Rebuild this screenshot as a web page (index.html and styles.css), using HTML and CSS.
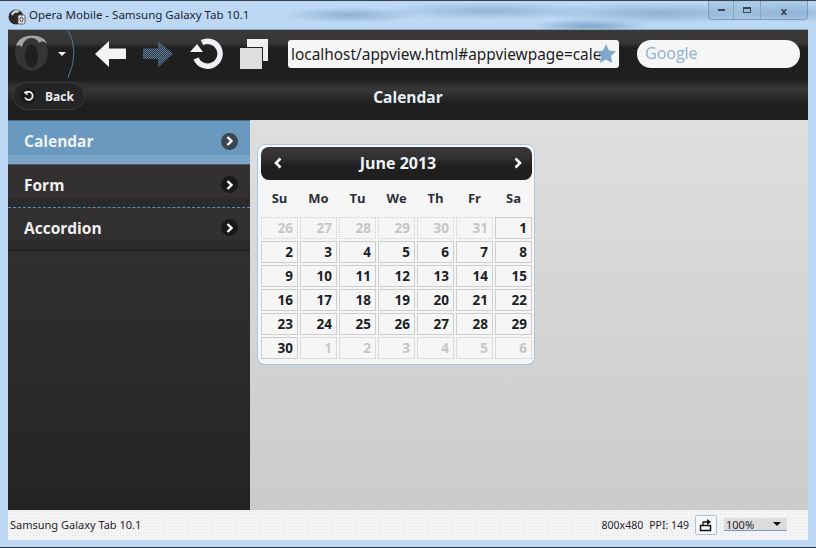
FILE: index.html
```html
<!DOCTYPE html>
<html lang="en">
  <head>
    <meta charset="UTF-8" />
    <title>Opera Mobile - Samsung Galaxy Tab 10.1</title>
    <link rel="stylesheet" href="styles.css">
  </head>
  <body>
    <div class="window">
      <div class="titlebar">
        <svg class="app-icon" width="18" height="18" viewBox="0 0 18 18">
          <circle cx="8" cy="10" r="7.5" fill="#2b2b2b" />
          <path d="M3 7a6 6 0 0 1 9-3l-3 2a3 3 0 0 0-4 3z" fill="#cfcfcf" />
          <rect x="10" y="8" width="7" height="9" rx="1.5" fill="#f1f1f1" stroke="#555" />
          <ellipse cx="13.5" cy="12.5" rx="1.5" ry="2.4" fill="none" stroke="#333" />
        </svg>
        <span class="window-title">Opera Mobile - Samsung Galaxy Tab 10.1</span>
        <div class="window-buttons">
          <div class="win-btn btn-min"><span class="glyph-min"></span></div>
          <div class="win-btn btn-max"><span class="glyph-max"></span></div>
          <div class="win-btn btn-close"><span class="glyph-close">x</span></div>
        </div>
      </div>

      <div class="app">
        <div class="toolbar">
          <div class="opera-menu">
            <svg width="72" height="50" viewBox="0 0 72 50">
              <defs>
                <pattern id="dither" width="2" height="2" patternUnits="userSpaceOnUse">
                  <rect width="2" height="2" fill="#2a3845" />
                  <rect width="1" height="1" fill="#5d7c96" />
                  <rect x="1" y="1" width="1" height="1" fill="#5d7c96" />
                </pattern>
              </defs>
              <path d="M60 1Q72 22 60 49" fill="none" stroke="#4f7796" stroke-width="1" />
              <ellipse cx="23.500" cy="24" rx="16.500" ry="17.500" fill="#363535" />
              <path d="M8 17C10 10 16 6.500 24 6.500S38 10 39 15C36 12 33 12 31.500 14 29 10 26 9 23.500 9 18 9 15 13 14 18 12 16 10 16 8 17z" fill="#a5a5a5" />
              <ellipse cx="23.500" cy="27" rx="6.500" ry="11.500" fill="#1f1f1f" />
              <path d="M50 23h8l-4 4z" fill="#f4f4f4" />
            </svg>
          </div>
          <svg class="tool-back" width="31" height="26" viewBox="0 0 31 26">
            <path d="M0 13 14 0v7.500h17v10.500H14v8z" fill="#f4f4f4" />
          </svg>
          <svg class="tool-forward" width="30" height="26" viewBox="0 0 30 26">
            <path d="M30 13 15 0v7.500H0V18h15v8z" fill="url(#dither)" />
          </svg>
          <svg class="tool-reload" width="34" height="32" viewBox="0 0 34 32">
            <path d="M12 4.500a12.500 12.500 0 1 1-6 16" fill="none" stroke="#eef2f5" stroke-width="5.500" />
            <path d="M7 6 0 14h13z" fill="#f4f4f4" />
          </svg>
          <svg class="tool-tabs" width="29" height="30" viewBox="0 0 29 30">
            <path d="M7 0h21v22h-5V8H7z" fill="#f1f1f1" />
            <rect x="0" y="9" width="22" height="21" class="tabs-front" />
          </svg>
          <div class="url-box">
            <span class="url-text">localhost/appview.html#appviewpage=cale</span>
            <svg class="url-star" width="20" height="19" viewBox="0 0 20 19">
              <path d="M10 0l3 6.500 7 .8-5.200 4.700 1.400 7L10 15.500 3.800 19l1.400-7L0 7.300l7-.8z" fill="#7fa6cb" />
            </svg>
          </div>
          <div class="search-box">Google</div>
        </div>

        <div class="page-header">
          <div class="back-btn">
            <svg width="16" height="16" viewBox="0 0 16 16">
              <circle cx="8" cy="8" r="8" fill="#1a1a1a" />
              <path d="M6.500 4.500a4 4 0 1 1-1.500 5" fill="none" stroke="#f1f1f1" stroke-width="1.800" />
              <path d="M3.500 4.500l4-2v5z" fill="#f1f1f1" />
            </svg>
            <span>Back</span>
          </div>
          <h1 class="page-title">Calendar</h1>
        </div>

        <div class="content">
          <ul class="sidebar">
            <li class="nav-item active">
              <span>Calendar</span>
              <span class="nav-arrow"><svg width="10" height="10" viewBox="0 0 10 10"><path d="M2.500 1l4 4-4 4" fill="none" stroke="#fff" stroke-width="2.400" /></svg></span>
            </li>
            <li class="nav-item">
              <span>Form</span>
              <span class="nav-arrow"><svg width="10" height="10" viewBox="0 0 10 10"><path d="M2.500 1l4 4-4 4" fill="none" stroke="#fff" stroke-width="2.400" /></svg></span>
            </li>
            <li class="nav-item">
              <span>Accordion</span>
              <span class="nav-arrow"><svg width="10" height="10" viewBox="0 0 10 10"><path d="M2.500 1l4 4-4 4" fill="none" stroke="#fff" stroke-width="2.400" /></svg></span>
            </li>
          </ul>

          <div class="main">
            <div class="calendar">
              <div class="cal-header">
                <svg width="10" height="12" viewBox="0 0 10 12"><path d="M7.500 1.500 3 6l4.500 4.500" fill="none" stroke="#fff" stroke-width="2.600" /></svg>
                <span class="cal-month">June 2013</span>
                <svg width="10" height="12" viewBox="0 0 10 12"><path d="M2.500 1.500 7 6l-4.500 4.500" fill="none" stroke="#fff" stroke-width="2.600" /></svg>
              </div>
              <div class="cal-weekdays">
                <span>Su</span><span>Mo</span><span>Tu</span><span>We</span><span>Th</span><span>Fr</span><span>Sa</span>
              </div>
              <div class="cal-grid">
                <div class="day off">26</div><div class="day off">27</div><div class="day off">28</div><div class="day off">29</div><div class="day off">30</div><div class="day off">31</div><div class="day">1</div>
                <div class="day">2</div><div class="day">3</div><div class="day">4</div><div class="day">5</div><div class="day">6</div><div class="day">7</div><div class="day">8</div>
                <div class="day">9</div><div class="day">10</div><div class="day">11</div><div class="day">12</div><div class="day">13</div><div class="day">14</div><div class="day">15</div>
                <div class="day">16</div><div class="day">17</div><div class="day">18</div><div class="day">19</div><div class="day">20</div><div class="day">21</div><div class="day">22</div>
                <div class="day">23</div><div class="day">24</div><div class="day">25</div><div class="day">26</div><div class="day">27</div><div class="day">28</div><div class="day">29</div>
                <div class="day">30</div><div class="day off next">1</div><div class="day off next">2</div><div class="day off next">3</div><div class="day off next">4</div><div class="day off next">5</div><div class="day off next">6</div>
              </div>
            </div>
          </div>
        </div>

        <div class="statusbar">
          <span class="device-name">Samsung Galaxy Tab 10.1</span>
          <span class="status-item">800x480</span>
          <span class="status-item">PPI: 149</span>
          <div class="rotate-btn">
            <svg width="14" height="14" viewBox="0 0 14 14">
              <rect x="1.500" y="7.500" width="10" height="5" fill="none" stroke="#111" stroke-width="1.500" />
              <path d="M4 7V4h5" fill="none" stroke="#111" stroke-width="1.300" />
              <path d="M8 1l4 3-4 3z" fill="#111" />
            </svg>
          </div>
          <div class="zoom-select">
            <span>100%</span>
            <span class="zoom-caret"></span>
          </div>
        </div>
      </div>
    </div>
  </body>
</html>
```

FILE: styles.css
```css
* {
  box-sizing: border-box;
}

html,
body {
  margin: 0;
  height: 100%;
  overflow: hidden;
}

body {
  font-family: "Open Sans", "Noto Sans", sans-serif;
  background-color: #222;
}

.window {
  width: 816px;
  height: 548px;
  display: flex;
  flex-direction: column;
  padding: 0 8px 7px 8px;
  border-top: 1px solid #38424c;
  border-bottom: 1px solid #2a3440;
  background-color: #bcd8f5;
  background-image:
    radial-gradient(ellipse 70px 8px at 350px 14px, #8fb0d1, transparent),
    radial-gradient(ellipse 110px 9px at 490px 10px, #92b3d4, transparent),
    radial-gradient(ellipse 60px 7px at 590px 25px, #7fa5c9, transparent),
    radial-gradient(ellipse 120px 11px at 660px 12px, #8eb0d1, transparent),
    radial-gradient(ellipse 60px 10px at 790px 12px, #94b5d6, transparent);
  background-repeat: no-repeat;
}

.titlebar {
  height: 28px;
  flex: none;
  display: flex;
  align-items: flex-start;
}

.app-icon {
  margin: 6px 0 0 0;
}

.window-title {
  margin: 6px 0 0 3px;
  font-family: "Noto Sans", sans-serif;
  font-size: 11.500px;
  line-height: 16px;
  color: #1c2630;
  white-space: nowrap;
}

.window-buttons {
  margin-left: auto;
  display: flex;
  width: 100px;
  height: 19px;
  border: 1px solid #7f9cbb;
  border-top: none;
  border-radius: 0 0 4px 4px;
  background-color: rgba(140, 175, 210, 0.35);
}

.win-btn {
  display: flex;
  align-items: center;
  justify-content: center;
  border-right: 1px solid #86a4c2;
}

.btn-min {
  width: 25px;
}

.btn-max {
  width: 27px;
}

.btn-close {
  flex: 1;
  border-right: none;
}

.glyph-min {
  width: 7px;
  height: 2px;
  background-color: #3a4652;
}

.glyph-max {
  width: 8px;
  height: 6px;
  border: 1px solid #3a4652;
  border-top-width: 2px;
}

.glyph-close {
  font-size: 11px;
  line-height: 11px;
  font-weight: 700;
  color: #3a4652;
}

.app {
  flex: 1;
  min-height: 0;
  display: flex;
  flex-direction: column;
  border-top: 1px solid #8aa5bf;
}

.toolbar {
  height: 50px;
  flex: none;
  display: flex;
  align-items: center;
  padding-bottom: 2px;
  background: linear-gradient(to bottom, #3a3838 0, #373535 13px, #201f1f 18px, #1f1f1f 100%);
}

.opera-menu {
  width: 72px;
  height: 48px;
  flex: none;
}

.opera-menu svg {
  display: block;
  margin-top: -1px;
}

.tool-back {
  margin-left: 15px;
  flex: none;
}

.tool-forward {
  margin-left: 17px;
  flex: none;
}

.tool-reload {
  margin-left: 17px;
  flex: none;
}

.tool-tabs {
  margin-left: 16px;
  flex: none;
}

.tabs-front {
  fill: #dedede;
}

.url-box {
  margin-left: 19px;
  width: 331px;
  height: 28px;
  flex: none;
  display: flex;
  align-items: center;
  position: relative;
  padding-left: 3px;
  background-color: #f6f6f6;
  border-radius: 3px;
}

.url-text {
  font-family: "Noto Sans", sans-serif;
  font-size: 15.400px;
  color: #1d1d1d;
  white-space: nowrap;
}

.url-star {
  position: absolute;
  right: 3px;
  top: 4px;
}

.search-box {
  margin-left: 18px;
  width: 163px;
  height: 28px;
  flex: none;
  padding-left: 8px;
  background-color: #f6f6f6;
  border-radius: 14px;
  font-size: 16px;
  line-height: 27px;
  color: #8fb0d0;
}

.page-header {
  height: 40px;
  flex: none;
  position: relative;
  display: flex;
  align-items: center;
  justify-content: center;
  padding-bottom: 7px;
  background: linear-gradient(to bottom, #1f1f1f 0, #2c2b2b 3px, #383737 10px, #1e1e1e 24px, #1e1e1e 100%);
}

.page-title {
  margin: 0;
  font-size: 15.500px;
  font-weight: 700;
  color: #e9f1f7;
}

.back-btn {
  position: absolute;
  left: 5px;
  top: 2px;
  width: 72px;
  height: 28px;
  display: flex;
  align-items: center;
  gap: 9px;
  padding-left: 6px;
  border: 1px solid #3a3a3a;
  border-radius: 14px;
  background-color: #262525;
  font-size: 12px;
  font-weight: 700;
  color: #ebebeb;
}

.content {
  flex: 1;
  min-height: 0;
  display: flex;
}

.sidebar {
  width: 242px;
  flex: none;
  margin: 0;
  padding: 0;
  list-style: none;
  background: linear-gradient(to bottom, #333131 0, #322f30 30%, #242323 100%);
}

.nav-item {
  height: 43px;
  position: relative;
  display: flex;
  align-items: center;
  justify-content: space-between;
  padding: 0 12px 3px 16px;
  border-bottom: 1px dashed #5f8cb0;
  font-size: 15.500px;
  font-weight: 700;
  color: #f0f0f0;
}

/* dithered band along the bottom of each row */
.nav-item::after {
  content: "";
  position: absolute;
  left: 0;
  right: 0;
  bottom: 0;
  height: 9px;
  background-image: repeating-conic-gradient(#1d1d1d 0 25%, transparent 0 50%);
  background-size: 2px 2px;
  opacity: 0.55;
}

.nav-item:last-child {
  border-bottom: 1px solid #1b1b1b;
}

.nav-item.active {
  height: 45px;
  padding-bottom: 2px;
  background-color: #6a99bf;
  border-bottom: 1px solid #4d5660;
  box-shadow: inset 0 1px 0 #4d6a80;
}

.nav-item.active::after {
  background-image: repeating-conic-gradient(#a6c4dc 0 25%, transparent 0 50%);
}

.nav-arrow {
  width: 17px;
  height: 17px;
  display: flex;
  align-items: center;
  justify-content: center;
  border-radius: 50%;
  background-color: #191919;
}

.active .nav-arrow {
  background-color: #3a4550;
}

.main {
  flex: 1;
  padding: 24px 0 0 7px;
  background-color: #cfcfcf;
  background-image:
    radial-gradient(#f0f0f0 0.5px, transparent 0.6px),
    linear-gradient(to bottom, #dedede 0, #cbcbcb 100%);
  background-size: 4px 4px, 100% 100%;
}

.calendar {
  width: 278px;
  height: 221px;
  padding: 2px 2px 0 3px;
  border: 1px solid #a9c7e2;
  border-radius: 8px;
  background-color: #f6f6f6;
}

.cal-header {
  height: 33px;
  display: flex;
  align-items: center;
  justify-content: space-between;
  padding: 0 9px 2px 12px;
  border-radius: 8px;
  background: linear-gradient(to bottom, #3a3838 0, #333131 10px, #1f1f1f 19px);
  color: #f0f4f8;
}

.cal-month {
  font-size: 16px;
  font-weight: 700;
}

.cal-weekdays {
  height: 37px;
  display: grid;
  grid-template-columns: repeat(7, 39px);
  align-items: center;
  padding-bottom: 2px;
  text-align: center;
  font-size: 13px;
  font-weight: 700;
  color: #2a3038;
  margin-left: -1px;
}

.cal-grid {
  display: grid;
  grid-template-columns: repeat(7, 37px);
  grid-auto-rows: 22px;
  gap: 2px;
}

.day {
  padding-right: 4px;
  border: 1px solid #cdcdcd;
  text-align: right;
  font-size: 13.500px;
  line-height: 20px;
  font-weight: 700;
  color: #1a1f26;
}

.day.off {
  border: 1px dotted #cdcdcd;
  color: #c6c6c6;
}

.day.next {
  border: 1px solid #dcdcdc;
  background-image: radial-gradient(#d2d2d2 0.6px, transparent 0.7px);
  background-size: 2px 2px;
}

.statusbar {
  height: 30px;
  flex: none;
  display: flex;
  align-items: center;
  padding: 0 21px 1px 2px;
  background-color: #f4f4f4;
  background-image: radial-gradient(#e4e4e4 0.6px, transparent 0.7px);
  background-size: 3px 3px;
  font-family: "Noto Sans", sans-serif;
  font-size: 11px;
  color: #1f2428;
}

.device-name {
  margin-right: auto;
}

.status-item {
  margin-right: 6px;
  font-size: 10.500px;
}

.rotate-btn {
  width: 22px;
  height: 20px;
  display: flex;
  align-items: center;
  justify-content: center;
  border: 1px solid #a9c3dc;
  border-radius: 2px;
  background-color: #f8f8f8;
}

.zoom-select {
  width: 63px;
  height: 13px;
  margin-left: 7px;
  display: flex;
  align-items: center;
  justify-content: space-between;
  padding: 0 6px 0 2px;
  border-bottom: 1px solid #6f9cc6;
  background-color: #dcdcdc;
}

.zoom-caret {
  width: 0;
  height: 0;
  border-left: 4px solid transparent;
  border-right: 4px solid transparent;
  border-top: 4px solid #111;
}
```
